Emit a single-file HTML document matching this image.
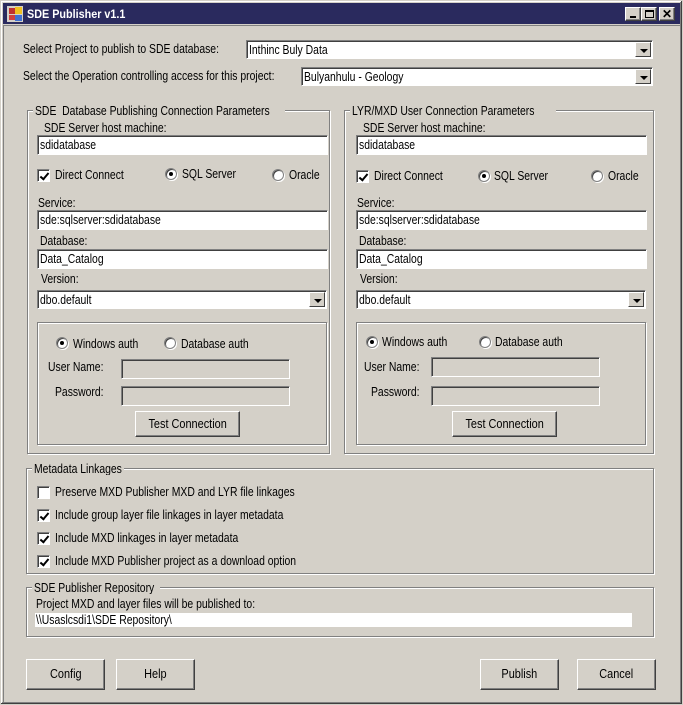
<!DOCTYPE html>
<html><head><meta charset="utf-8"><style>
*{box-sizing:border-box;margin:0;padding:0}
body{width:683px;height:705px;background:#d4d0c8;position:relative;overflow:hidden;font-family:"Liberation Sans",sans-serif;font-size:13px;color:#000}
.a{position:absolute}
.t{position:absolute;white-space:nowrap;line-height:14px;transform:scaleX(.8);transform-origin:0 0}
.tb{position:absolute;background:#fff;border-top:1px solid #808080;border-left:1px solid #808080;border-right:1px solid #fff;border-bottom:1px solid #fff;box-shadow:inset 1px 1px 0 #404040}
.dis{background:#d4d0c8}
.grp{position:absolute;border:1px solid #808080;box-shadow:1px 1px 0 #fff,inset 1px 1px 0 #fff}
.gl{position:absolute;background:#d4d0c8;padding:0 2px;white-space:nowrap;line-height:13px;top:-7px;left:5px;overflow:hidden}
.gl span{display:inline-block;transform:scaleX(.8);transform-origin:0 0}
.btn{position:absolute;background:#d4d0c8;border-top:1px solid #fff;border-left:1px solid #fff;border-right:1px solid #404040;border-bottom:1px solid #404040;box-shadow:inset -1px -1px 0 #808080;text-align:center}
.btn span{display:inline-block;transform:scaleX(.84)}
.dd{position:absolute;right:1px;top:1px;bottom:1px;width:16px;background:#d4d0c8;border-top:1px solid #fff;border-left:1px solid #fff;border-right:1px solid #404040;border-bottom:1px solid #404040}
.dd:after{content:"";position:absolute;left:4px;top:6px;border-left:4px solid transparent;border-right:4px solid transparent;border-top:4px solid #000}
.cb{position:absolute;width:13px;height:13px;background:#fff;border-top:1px solid #808080;border-left:1px solid #808080;border-right:1px solid #fff;border-bottom:1px solid #fff;box-shadow:inset 1px 1px 0 #404040}
.cb.k:after{content:"";position:absolute;left:4px;top:1px;width:3px;height:7px;border-right:2px solid #000;border-bottom:2px solid #000;transform:rotate(40deg)}
.rb{position:absolute;width:12px;height:12px;border-radius:50%;background:#fff;border:1px solid #808080;box-shadow:inset 1px 1px 0 #404040,1px 1px 0 #fff}
.rb.k:after{content:"";position:absolute;left:3px;top:3px;width:4px;height:4px;border-radius:50%;background:#000}
.in{padding-left:2px;line-height:17px;white-space:nowrap}
.in span{display:inline-block;transform:scaleX(.8);transform-origin:0 0}
</style></head><body>
<div class="a" style="left:0;top:0;width:683px;height:705px;border:1px solid #d4d0c8;box-shadow:inset -1px -1px 0 #404040,inset 1px 1px 0 #fff,inset -2px -2px 0 #808080"></div>
<div class="a" style="left:3px;top:3px;width:677px;height:21px;background:#2a2a5e"></div>
<div class="a" style="left:7px;top:6px;width:16px;height:16px;background:#d4d0c8">
 <div class="a" style="left:2px;top:2px;width:6px;height:6px;background:#c03030"></div>
 <div class="a" style="left:8px;top:1px;width:7px;height:7px;background:#f0c020"></div>
 <div class="a" style="left:2px;top:9px;width:6px;height:5px;background:#d04040"></div>
 <div class="a" style="left:8px;top:9px;width:7px;height:6px;background:#4070d0"></div>
</div>
<div class="t" style="left:27px;top:7px;color:#fff;font-weight:bold;font-size:12px;transform:scaleX(.9)">SDE Publisher v1.1</div>
<div class="btn" style="left:625px;top:7px;width:16px;height:14px"><div class="a" style="left:4px;top:8px;width:6px;height:2px;background:#000"></div></div>
<div class="btn" style="left:641px;top:7px;width:16px;height:14px"><div class="a" style="left:3px;top:2px;width:9px;height:8px;border:1px solid #000;border-top-width:2px"></div></div>
<div class="btn" style="left:659px;top:7px;width:16px;height:14px;font-weight:bold;font-size:12px;line-height:12px">✕</div>
<div class="a" style="left:3px;top:25px;width:677px;height:677px;border-top:1px solid #808080;border-left:1px solid #808080"></div>

<div class="t" style="left:23px;top:42px">Select Project to publish to SDE database:</div>
<div class="tb in" style="left:246px;top:40px;width:407px;height:19px"><span>Inthinc Buly Data</span><div class="dd"></div></div>
<div class="t" style="left:23px;top:69px">Select the Operation controlling access for this project:</div>
<div class="tb in" style="left:301px;top:67px;width:352px;height:19px"><span>Bulyanhulu - Geology</span><div class="dd"></div></div>

<div class="grp" style="left:27px;top:110px;width:303px;height:344px"><div class="gl" style="width:252px"><span>SDE&nbsp; Database Publishing Connection Parameters</span></div></div>
<div class="t" style="left:44px;top:121px">SDE Server host machine:</div>
<div class="tb in" style="left:37px;top:135px;width:291px;height:20px"><span>sdidatabase</span></div>
<div class="cb k" style="left:37px;top:169px"></div><div class="t" style="left:55px;top:168px">Direct Connect</div>
<div class="rb k" style="left:165px;top:168px"></div><div class="t" style="left:182px;top:167px">SQL Server</div>
<div class="rb" style="left:272px;top:169px"></div><div class="t" style="left:289px;top:168px">Oracle</div>
<div class="t" style="left:38px;top:196px">Service:</div>
<div class="tb in" style="left:37px;top:210px;width:291px;height:20px"><span>sde:sqlserver:sdidatabase</span></div>
<div class="t" style="left:40px;top:234px">Database:</div>
<div class="tb in" style="left:37px;top:249px;width:291px;height:20px"><span>Data_Catalog</span></div>
<div class="t" style="left:41px;top:272px">Version:</div>
<div class="tb in" style="left:37px;top:290px;width:290px;height:19px"><span>dbo.default</span><div class="dd"></div></div>
<div class="grp" style="left:37px;top:322px;width:290px;height:123px"></div>
<div class="rb k" style="left:56px;top:337px"></div><div class="t" style="left:73px;top:337px">Windows auth</div>
<div class="rb" style="left:164px;top:337px"></div><div class="t" style="left:181px;top:337px">Database auth</div>
<div class="t" style="left:48px;top:360px">User Name:</div>
<div class="tb dis" style="left:121px;top:359px;width:169px;height:20px"></div>
<div class="t" style="left:55px;top:385px">Password:</div>
<div class="tb dis" style="left:121px;top:386px;width:169px;height:20px"></div>
<div class="btn" style="left:135px;top:411px;width:105px;height:26px;line-height:23px"><span>Test Connection</span></div>

<div class="grp" style="left:344px;top:110px;width:310px;height:344px"><div class="gl" style="width:206px"><span>LYR/MXD User Connection Parameters</span></div></div>
<div class="t" style="left:363px;top:121px">SDE Server host machine:</div>
<div class="tb in" style="left:356px;top:135px;width:291px;height:20px"><span>sdidatabase</span></div>
<div class="cb k" style="left:356px;top:170px"></div><div class="t" style="left:374px;top:169px">Direct Connect</div>
<div class="rb k" style="left:478px;top:170px"></div><div class="t" style="left:494px;top:169px">SQL Server</div>
<div class="rb" style="left:591px;top:170px"></div><div class="t" style="left:608px;top:169px">Oracle</div>
<div class="t" style="left:357px;top:196px">Service:</div>
<div class="tb in" style="left:356px;top:210px;width:291px;height:20px"><span>sde:sqlserver:sdidatabase</span></div>
<div class="t" style="left:359px;top:234px">Database:</div>
<div class="tb in" style="left:356px;top:249px;width:291px;height:20px"><span>Data_Catalog</span></div>
<div class="t" style="left:360px;top:272px">Version:</div>
<div class="tb in" style="left:356px;top:290px;width:290px;height:19px"><span>dbo.default</span><div class="dd"></div></div>
<div class="grp" style="left:356px;top:322px;width:290px;height:123px"></div>
<div class="rb k" style="left:366px;top:336px"></div><div class="t" style="left:382px;top:335px">Windows auth</div>
<div class="rb" style="left:479px;top:336px"></div><div class="t" style="left:495px;top:335px">Database auth</div>
<div class="t" style="left:364px;top:360px">User Name:</div>
<div class="tb dis" style="left:431px;top:357px;width:169px;height:20px"></div>
<div class="t" style="left:371px;top:385px">Password:</div>
<div class="tb dis" style="left:431px;top:386px;width:169px;height:20px"></div>
<div class="btn" style="left:452px;top:411px;width:105px;height:26px;line-height:23px"><span>Test Connection</span></div>

<div class="grp" style="left:26px;top:468px;width:628px;height:106px"><div class="gl" style="width:92px"><span>Metadata Linkages</span></div></div>
<div class="cb" style="left:37px;top:486px"></div><div class="t" style="left:55px;top:485px">Preserve MXD Publisher MXD and LYR file linkages</div>
<div class="cb k" style="left:37px;top:509px"></div><div class="t" style="left:55px;top:508px">Include group layer file linkages in layer metadata</div>
<div class="cb k" style="left:37px;top:532px"></div><div class="t" style="left:55px;top:531px">Include MXD linkages in layer metadata</div>
<div class="cb k" style="left:37px;top:555px"></div><div class="t" style="left:55px;top:554px">Include MXD Publisher project as a download option</div>

<div class="grp" style="left:26px;top:587px;width:628px;height:50px"><div class="gl" style="width:128px"><span>SDE Publisher Repository</span></div></div>
<div class="t" style="left:36px;top:597px">Project MXD and layer files will be published to:</div>
<div class="a" style="left:35px;top:613px;width:597px;height:14px;background:#fff"></div>
<div class="t" style="left:36px;top:613px">\\Usaslcsdi1\SDE Repository\</div>

<div class="btn" style="left:26px;top:659px;width:79px;height:31px;line-height:28px"><span>Config</span></div>
<div class="btn" style="left:116px;top:659px;width:79px;height:31px;line-height:28px"><span>Help</span></div>
<div class="btn" style="left:480px;top:659px;width:79px;height:31px;line-height:28px"><span>Publish</span></div>
<div class="btn" style="left:577px;top:659px;width:79px;height:31px;line-height:28px"><span>Cancel</span></div>
</body></html>
